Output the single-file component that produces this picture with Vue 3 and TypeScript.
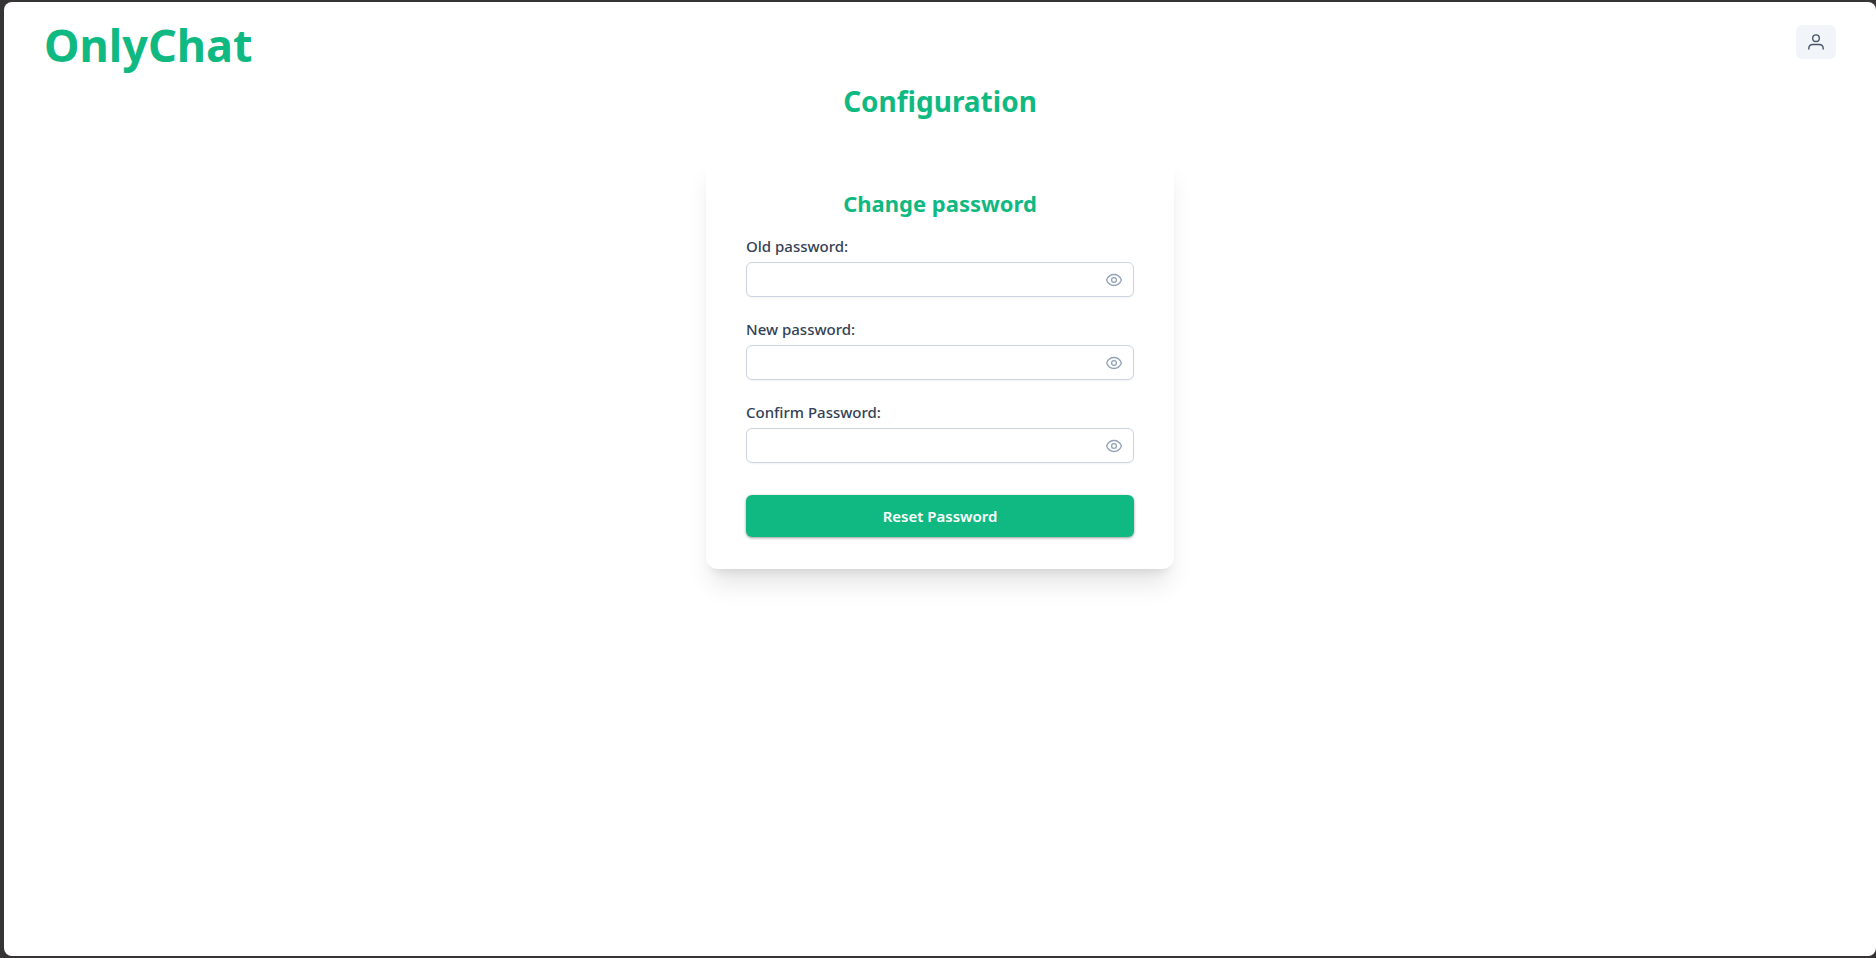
<script setup lang="ts">
import { reactive } from 'vue'

interface PasswordField {
  id: string
  label: string
  value: string
  visible: boolean
  autocomplete: string
}

const fields = reactive<PasswordField[]>([
  { id: 'old-password', label: 'Old password:', value: '', visible: false, autocomplete: 'current-password' },
  { id: 'new-password', label: 'New password:', value: '', visible: false, autocomplete: 'new-password' },
  { id: 'confirm-password', label: 'Confirm Password:', value: '', visible: false, autocomplete: 'new-password' },
])

function resetPassword(): void {
  fields.forEach((field) => {
    field.value = ''
    field.visible = false
  })
}
</script>

<template>
  <div class="frame">
    <div class="page">
      <header class="topbar">
        <h1 class="brand">OnlyChat</h1>
        <button class="account" type="button" aria-label="Account">
          <svg viewBox="0 0 16 16" width="16" height="16" fill="none" stroke="currentColor" stroke-width="1.4" stroke-linecap="round" aria-hidden="true">
            <circle cx="8" cy="4.2" r="3.3" />
            <path d="M.8 15v-.5C.8 12 2.600 10.500 5 10.500h6c2.400 0 4.200 1.500 4.200 4v.5" />
          </svg>
        </button>
      </header>

      <main class="content">
        <h2 class="heading">Configuration</h2>
        <form class="card" @submit.prevent="resetPassword">
          <h3 class="card-title">Change password</h3>
          <div v-for="field in fields" :key="field.id" class="field">
            <label class="label" :for="field.id">{{ field.label }}</label>
            <div class="control">
              <input
                :id="field.id"
                v-model="field.value"
                class="input"
                :type="field.visible ? 'text' : 'password'"
                :autocomplete="field.autocomplete"
              />
              <button class="reveal" type="button" aria-label="Show password" @click="field.visible = !field.visible">
                <svg viewBox="0 0 16 16" width="16" height="16" fill="none" stroke="currentColor" stroke-width="1.3" aria-hidden="true">
                  <path d="M.6 8C2 4.500 4.700 2.500 8 2.500S14 4.500 15.400 8C14 11.500 11.300 13.500 8 13.500S2 11.500.6 8Z" stroke-linejoin="round" />
                  <circle cx="8" cy="8" r="2.4" />
                </svg>
              </button>
            </div>
          </div>
          <button class="submit" type="submit">Reset Password</button>
        </form>
      </main>
    </div>
  </div>
</template>

<style>
body {
  margin: 0;
  background: #363434;
}
</style>

<style scoped>
.frame {
  box-sizing: border-box;
  display: flex;
  min-height: 100vh;
  padding: 2px 0 2px 4px;
  background: #363434;
  color: #334155;
  font-family: 'Segoe UI', 'Noto Sans', 'Open Sans', sans-serif;
  font-size: 15px;
  line-height: 24px;
}

.page {
  flex: 1;
  border-radius: 8px;
  background: #fff;
}

.topbar {
  display: flex;
  align-items: flex-start;
  justify-content: space-between;
  padding: 19px 40px 0;
}

.brand,
.heading,
.card-title {
  margin: 0;
  color: #10b981;
  font-weight: 700;
}

.brand {
  font-size: 45px;
  line-height: 48px;
}

.account {
  display: flex;
  align-items: center;
  justify-content: center;
  width: 40px;
  height: 34px;
  margin: 4px 0 0;
  padding: 0;
  border: 0;
  border-radius: 6px;
  background: #f1f5f9;
  color: #475569;
}

.content {
  display: flex;
  flex-direction: column;
  align-items: center;
  padding: 14px 40px 40px;
}

.heading {
  font-size: 28px;
  line-height: 36px;
}

.card {
  box-sizing: border-box;
  display: flex;
  flex-direction: column;
  width: 100%;
  max-width: 468px;
  margin-top: 36px;
  padding: 32px 40px;
  border-radius: 12px;
  background: #fff;
  box-shadow: 0 20px 25px -5px rgba(0, 0, 0, 0.1), 0 8px 10px -6px rgba(0, 0, 0, 0.1);
}

.card-title {
  margin-bottom: 15px;
  font-size: 22px;
  line-height: 32px;
  text-align: center;
}

.field {
  display: flex;
  flex-direction: column;
  gap: 4px;
  margin-bottom: 20px;
}

.label {
  color: #334155;
  font-weight: 500;
}

.control {
  position: relative;
  display: flex;
}

.input {
  box-sizing: border-box;
  width: 100%;
  height: 35px;
  padding: 0 40px 0 12px;
  border: 1px solid #cbd5e1;
  border-radius: 6px;
  background: #fff;
  box-shadow: 0 1px 2px rgba(18, 18, 23, 0.05);
  color: #334155;
  font: inherit;
}

.reveal {
  position: absolute;
  top: 0;
  right: 0;
  bottom: 0;
  display: flex;
  align-items: center;
  padding: 0 12px;
  border: 0;
  background: none;
  color: #94a3b8;
}

.submit {
  height: 42px;
  margin-top: 12px;
  border: 0;
  border-radius: 6px;
  background: #10b981;
  box-shadow: 0 1px 3px rgba(0, 0, 0, 0.4);
  color: #fff;
  font: inherit;
  font-weight: 600;
}
</style>
